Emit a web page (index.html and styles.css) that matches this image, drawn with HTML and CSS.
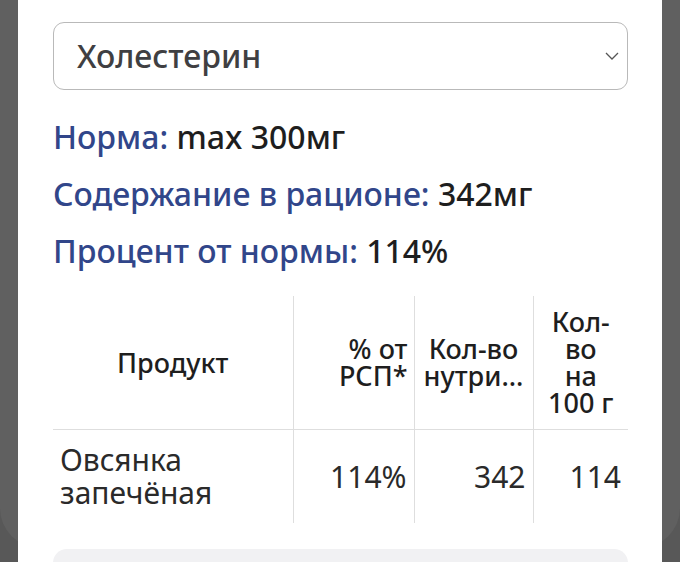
FILE: index.html
```html
<!DOCTYPE html>
<html lang="ru">
<head>
<meta charset="utf-8">
<link rel="stylesheet" href="styles.css">
</head>
<body>
<div class="backdrop"></div>
<div class="sheet">
  <div class="select">
    <span class="select-text">Холестерин</span>
    <svg class="chev" width="14" height="8" viewBox="0 0 14 8"><path d="M1 1 L7 7 L13 1" fill="none" stroke="#555" stroke-width="1.3"/></svg>
  </div>
  <div class="stats">
    <div class="stat"><span class="lbl">Норма:</span> <span class="val">max 300мг</span></div>
    <div class="stat"><span class="lbl">Содержание в рационе:</span> <span class="val">342мг</span></div>
    <div class="stat"><span class="lbl">Процент от нормы:</span> <span class="val">114%</span></div>
  </div>
  <table class="tbl">
    <colgroup>
      <col class="c1"><col class="c2"><col class="c3"><col class="c4">
    </colgroup>
    <thead>
      <tr>
        <th class="center">Продукт</th>
        <th class="right">% от<br>РСП*</th>
        <th class="center">Кол-во<br>нутри...</th>
        <th class="center">Кол-<br>во<br>на<br>100 г</th>
      </tr>
    </thead>
    <tbody>
      <tr>
        <td class="left">Овсянка запечёная</td>
        <td class="right">114%</td>
        <td class="right">342</td>
        <td class="right">114</td>
      </tr>
    </tbody>
  </table>
  <div class="footer-box"></div>
</div>
</body>
</html>
```
FILE: styles.css
```css
html, body {
  margin: 0;
  padding: 0;
}
body {
  background: #585858;
  font-family: "Noto Sans", "Open Sans", sans-serif;
  height: 562px;
  overflow: hidden;
  position: relative;
}
.backdrop {
  position: absolute;
  left: 0;
  right: 0;
  top: 0;
  height: 548px;
  background: #606060;
  border-radius: 0 0 40px 40px;
}
.sheet {
  position: relative;
  margin: 0 18px;
  background: #ffffff;
  height: 562px;
  padding: 22px 34px 0 35px;
  box-sizing: border-box;
}
.select {
  height: 68px;
  box-sizing: border-box;
  border: 1px solid #b9b9b9;
  border-radius: 11px;
  display: flex;
  align-items: center;
  justify-content: space-between;
  padding: 0 8px 2px 23px;
}
.select-text {
  font-size: 32px;
  font-weight: 500;
  color: #3f3f42;
}
.chev {
  margin-top: 2px;
}
.stats {
  margin-top: 18px;
}
.stat {
  font-size: 32px;
  line-height: 57px;
  font-weight: 500;
  white-space: nowrap;
}
.lbl {
  color: #31468a;
}
.val {
  color: #1e1e1e;
}
.tbl {
  margin-top: 17px;
  width: 575px;
  border-collapse: collapse;
  table-layout: fixed;
}
.c1 { width: 240px; }
.c2 { width: 121px; }
.c3 { width: 119px; }
.c4 { width: 95px; }
.tbl th {
  font-size: 27px;
  font-weight: 500;
  line-height: 27px;
  color: #1e1e1e;
  padding: 12px 6px 13px;
  border-bottom: 1.5px solid #dedede;
  vertical-align: middle;
  white-space: nowrap;
}
.tbl td {
  font-size: 30px;
  line-height: 33px;
  font-weight: 400;
  color: #2a2a2a;
  padding: 13px 7px 14px;
  vertical-align: middle;
}
.tbl th + th,
.tbl td + td {
  border-left: 1px solid #dedede;
}
.center { text-align: center; }
.right { text-align: right; }
.left { text-align: left; }
.footer-box {
  margin-top: 26px;
  height: 40px;
  background: #f1f1f3;
  border-radius: 14px;
}
```
